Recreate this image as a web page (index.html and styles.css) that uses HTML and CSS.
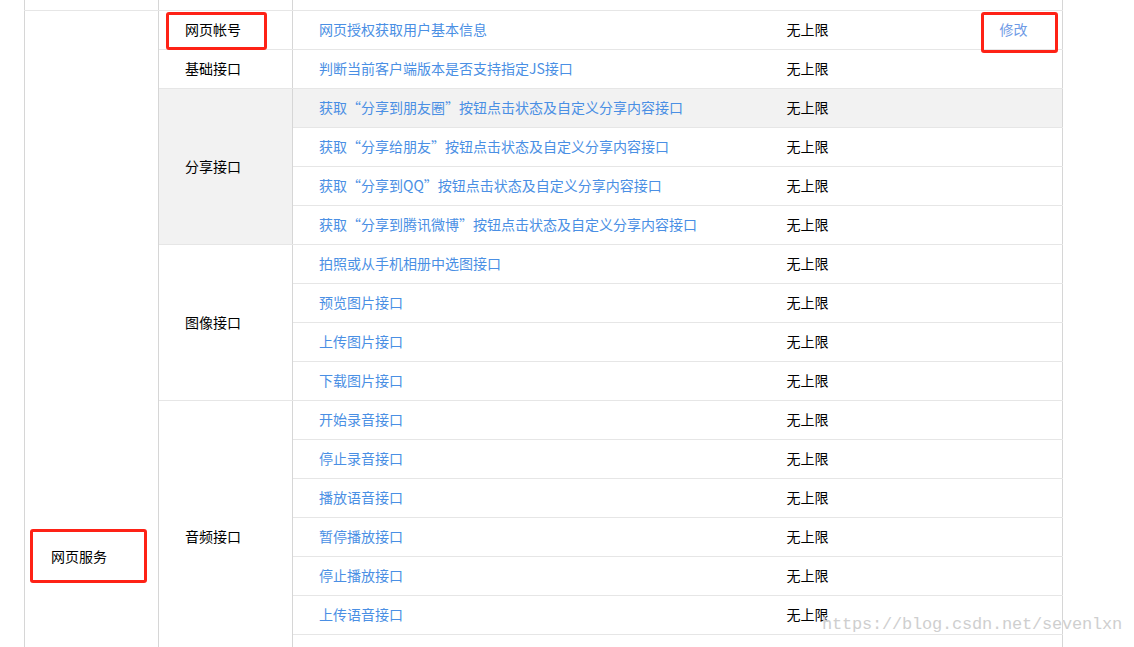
FILE: index.html
```html
<!DOCTYPE html>
<html lang="zh-CN">
<head>
<meta charset="UTF-8" />
<title>接口权限表</title>
<link rel="stylesheet" href="styles.css">
</head>
<body>
  <div class="page">
    <table class="perm-table">
      <colgroup>
        <col class="c-cat" />
        <col class="c-group" />
        <col class="c-name" />
        <col class="c-limit" />
        <col class="c-op" />
      </colgroup>
      <thead>
        <tr>
          <th>类目</th>
          <th>功能</th>
          <th colspan="3">接口</th>
        </tr>
      </thead>
      <tbody>
        <tr>
          <td class="cat" rowspan="28">网页服务</td>
          <td class="grp">网页帐号</td>
          <td><a href="#">网页授权获取用户基本信息</a></td>
          <td>无上限</td>
          <td><a href="#" class="op">修改</a></td>
        </tr>
        <tr>
          <td class="grp">基础接口</td>
          <td><a href="#">判断当前客户端版本是否支持指定JS接口</a></td>
          <td>无上限</td>
          <td></td>
        </tr>
        <tr class="hover">
          <td class="grp" rowspan="4">分享接口</td>
          <td><a href="#">获取“分享到朋友圈”按钮点击状态及自定义分享内容接口</a></td>
          <td>无上限</td>
          <td></td>
        </tr>
        <tr><td><a href="#">获取“分享给朋友”按钮点击状态及自定义分享内容接口</a></td><td>无上限</td><td></td></tr>
        <tr><td><a href="#">获取“分享到QQ”按钮点击状态及自定义分享内容接口</a></td><td>无上限</td><td></td></tr>
        <tr><td><a href="#">获取“分享到腾讯微博”按钮点击状态及自定义分享内容接口</a></td><td>无上限</td><td></td></tr>
        <tr>
          <td class="grp" rowspan="4">图像接口</td>
          <td><a href="#">拍照或从手机相册中选图接口</a></td>
          <td>无上限</td>
          <td></td>
        </tr>
        <tr><td><a href="#">预览图片接口</a></td><td>无上限</td><td></td></tr>
        <tr><td><a href="#">上传图片接口</a></td><td>无上限</td><td></td></tr>
        <tr><td><a href="#">下载图片接口</a></td><td>无上限</td><td></td></tr>
        <tr>
          <td class="grp" rowspan="7">音频接口</td>
          <td><a href="#">开始录音接口</a></td>
          <td>无上限</td>
          <td></td>
        </tr>
        <tr><td><a href="#">停止录音接口</a></td><td>无上限</td><td></td></tr>
        <tr><td><a href="#">播放语音接口</a></td><td>无上限</td><td></td></tr>
        <tr><td><a href="#">暂停播放接口</a></td><td>无上限</td><td></td></tr>
        <tr><td><a href="#">停止播放接口</a></td><td>无上限</td><td></td></tr>
        <tr><td><a href="#">上传语音接口</a></td><td>无上限</td><td></td></tr>
        <tr><td><a href="#">下载语音接口</a></td><td>无上限</td><td></td></tr>
        <tr>
          <td class="grp">智能接口</td>
          <td><a href="#">识别音频并返回识别结果接口</a></td>
          <td>无上限</td>
          <td></td>
        </tr>
        <tr>
          <td class="grp">设备信息</td>
          <td><a href="#">获取网络状态接口</a></td>
          <td>无上限</td>
          <td></td>
        </tr>
        <tr>
          <td class="grp" rowspan="2">地理位置</td>
          <td><a href="#">使用微信内置地图查看位置接口</a></td>
          <td>无上限</td>
          <td></td>
        </tr>
        <tr><td><a href="#">获取地理位置接口</a></td><td>无上限</td><td></td></tr>
        <tr>
          <td class="grp" rowspan="7">界面操作</td>
          <td><a href="#">隐藏右上角菜单接口</a></td>
          <td>无上限</td>
          <td></td>
        </tr>
        <tr><td><a href="#">显示右上角菜单接口</a></td><td>无上限</td><td></td></tr>
        <tr><td><a href="#">关闭当前网页窗口接口</a></td><td>无上限</td><td></td></tr>
        <tr><td><a href="#">批量隐藏功能按钮接口</a></td><td>无上限</td><td></td></tr>
        <tr><td><a href="#">批量显示功能按钮接口</a></td><td>无上限</td><td></td></tr>
        <tr><td><a href="#">隐藏所有非基础按钮接口</a></td><td>无上限</td><td></td></tr>
        <tr><td><a href="#">显示所有功能按钮接口</a></td><td>无上限</td><td></td></tr>
      </tbody>
    </table>

    <!-- screenshot annotations -->
    <div class="mark mark-account"></div>
    <div class="mark mark-edit"></div>
    <div class="mark mark-service"></div>
    <div class="watermark">https://blog.csdn.net/sevenlxn</div>
  </div>
</body>
</html>
```

FILE: styles.css
```css
/* Reset and base */
* {
  box-sizing: border-box;
}
html, body {
  margin: 0;
  padding: 0;
  background: #fff;
  font-family: "Microsoft YaHei", "Noto Sans CJK SC", sans-serif;
  font-size: 14px;
  color: #000;
  overflow: hidden;
}
.page {
  position: relative;
  height: 647px;
  overflow: hidden;
}

/* Table */
.perm-table {
  margin: -29px 0 0 24px;
  width: 1038px;
  border-collapse: collapse;
  table-layout: fixed;
  border-left: 1px solid #d6d6d6;
  border-right: 1px solid #d6d6d6;
}
.c-cat { width: 134px; }
.c-group { width: 134px; }
.c-name { width: 468px; }
.c-limit { width: 213px; }
.c-op { width: 89px; }

.perm-table th,
.perm-table td {
  height: 39px;
  padding: 0 0 2px 26px;
  border-top: 1px solid #e6e6e6;
  border-bottom: 1px solid #e6e6e6;
  text-align: left;
  font-weight: normal;
  white-space: nowrap;
  vertical-align: middle;
}
.perm-table th {
  border-left: 1px solid #d6d6d6;
  border-right: 1px solid #d6d6d6;
}
.perm-table td.cat,
.perm-table td.grp {
  border-right: 1px solid #d6d6d6;
}
.perm-table a {
  color: #4a8fe4;
  text-decoration: none;
}
.perm-table a.op {
  color: #6f9be6;
}
.perm-table tr.hover td {
  background: #f2f2f2;
}
.perm-table tr.hover td.cat {
  background: #fff;
}

/* Red annotation boxes */
.mark {
  position: absolute;
  border: 3px solid #fe2216;
  border-radius: 3px;
}
.mark-account {
  left: 166px;
  top: 12px;
  width: 101px;
  height: 38px;
}
.mark-edit {
  left: 981px;
  top: 12px;
  width: 77px;
  height: 41px;
}
.mark-service {
  left: 30px;
  top: 529px;
  width: 117px;
  height: 54px;
}

/* Blog watermark */
.watermark {
  position: absolute;
  left: 822px;
  top: 615px;
  font-family: "Liberation Mono", monospace;
  font-size: 17px;
  letter-spacing: -0.2px;
  color: #cfcfcf;
  text-shadow: 0 0 1px #fff;
}
```
